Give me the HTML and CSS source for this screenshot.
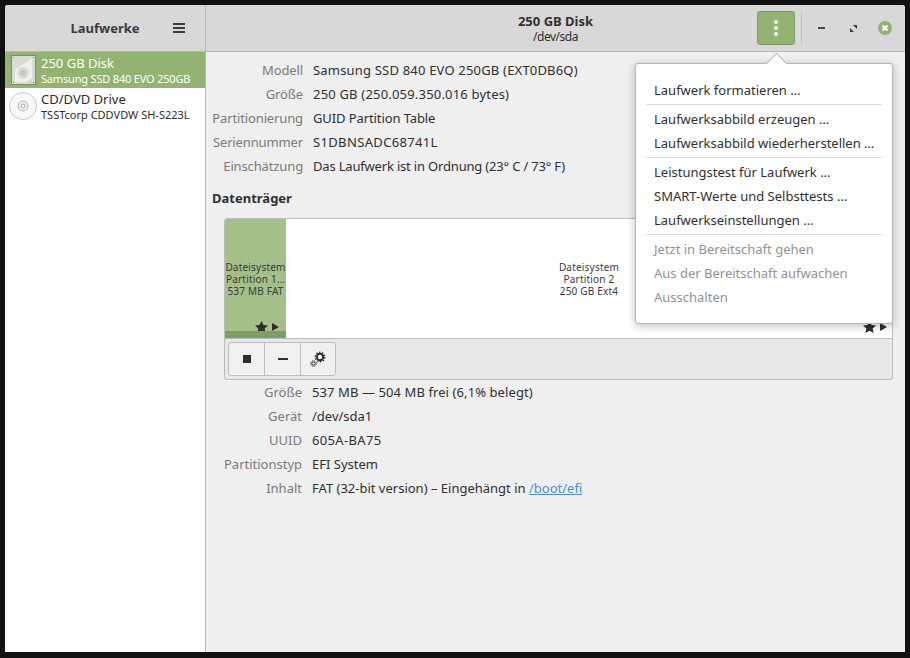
FILE: index.html
```html
<!DOCTYPE html>
<html lang="de">
<head>
<meta charset="utf-8">
<title>Laufwerke</title>
<link rel="stylesheet" href="styles.css">
</head>
<body>
<div class="window">
  <header class="titlebar">
    <div class="side-head">
      <span class="app-title">Laufwerke</span>
      <svg class="hamburger" width="12" height="10" viewBox="0 0 12 10"><path d="M0 0h12v2H0zM0 4h12v2H0zM0 8h12v2H0z" fill="#3d3d3d"/></svg>
    </div>
    <div class="main-head">
      <div class="head-title"><strong>250 GB Disk</strong><span>/dev/sda</span></div>
      <div class="head-actions">
        <button class="menu-btn"><svg width="4" height="16" viewBox="0 0 4 16"><circle cx="2" cy="2" r="2" fill="#fff"/><circle cx="2" cy="8" r="2" fill="#fff"/><circle cx="2" cy="14" r="2" fill="#fff"/></svg></button>
        <span class="head-sep"></span>
        <svg class="wm wm-min" width="7" height="2" viewBox="0 0 7 2"><rect width="7" height="2" fill="#4a4a4a"/></svg>
        <svg class="wm wm-max" width="7" height="7" viewBox="0 0 7 7"><path d="M3 0h4v4zM0 3l4 4H0z" fill="#3d3d3d"/></svg>
        <svg class="wm wm-close" width="14" height="14" viewBox="0 0 14 14"><circle cx="7" cy="7" r="7" fill="#92b372"/><path d="M4.500 4.500l5 5M9.500 4.500l-5 5" stroke="#fff" stroke-width="2"/></svg>
      </div>
    </div>
  </header>
  <div class="content">
    <aside class="sidebar">
      <div class="drive selected">
        <svg class="drive-icon" width="25" height="30" viewBox="0 0 25 30">
          <rect x=".5" y=".5" width="24" height="29" fill="#d8dcd4" stroke="#7c8a72"/>
          <path d="M21 3v20l-6 4H4V15z" fill="#eef0eb"/>
          <circle cx="12" cy="18" r="6" fill="#d9dcd5"/><circle cx="12" cy="18" r="3" fill="#c2c6bd"/>
          <path d="M2 2h1v1H2zM22 2h1v1h-1zM2 27h1v1H2zM22 27h1v1h-1z" fill="#777"/>
        </svg>
        <div class="drive-text"><span class="drive-name">250 GB Disk</span><span class="drive-model tight">Samsung SSD 840 EVO 250GB</span></div>
      </div>
      <div class="drive">
        <svg class="drive-icon" width="28" height="28" viewBox="0 0 28 28">
          <circle cx="14" cy="14" r="13.500" fill="#f8f8f8" stroke="#c4c8cc"/>
          <circle cx="14" cy="14" r="5" fill="#f0f0f0" stroke="#b5b5b5"/>
          <circle cx="14" cy="14" r="2" fill="#fff" stroke="#aaa"/>
        </svg>
        <div class="drive-text"><span class="drive-name">CD/DVD Drive</span><span class="drive-model">TSSTcorp CDDVDW SH-S223L</span></div>
      </div>
    </aside>
    <main class="main">
      <dl class="props top-props">
        <dt>Modell</dt><dd class="wide">Samsung SSD 840 EVO 250GB (EXT0DB6Q)</dd>
        <dt>Größe</dt><dd class="wide">250 GB (250.059.350.016 bytes)</dd>
        <dt>Partitionierung</dt><dd class="slim">GUID Partition Table</dd>
        <dt>Seriennummer</dt><dd class="wider">S1DBNSADC68741L</dd>
        <dt>Einschätzung</dt><dd class="tight">Das Laufwerk ist in Ordnung (23° C / 73° F)</dd>
      </dl>
      <h2 class="section">Datenträger</h2>
      <section class="volumes">
        <div class="volume-map">
          <div class="part part-one">
            <div class="part-label">Dateisystem<br>Partition 1…<br>537 MB FAT</div>
            <div class="part-flags"><svg width="13" height="12" viewBox="0 0 13 12"><path d="M6.500 0l2 4 4.500.6-3.300 3 .9 4.400-4.100-2.200L2.400 12l.9-4.400L0 4.600 4.500 4z" fill="#2e2e2e"/></svg><svg width="7" height="8" viewBox="0 0 7 8"><path d="M0 0l7 4-7 4z" fill="#2e2e2e"/></svg></div>
            <div class="part-usage"></div>
          </div>
          <div class="part part-two">
            <div class="part-label">Dateisystem<br>Partition 2<br>250 GB Ext4</div>
            <div class="part-flags"><svg width="13" height="12" viewBox="0 0 13 12"><path d="M6.500 0l2 4 4.500.6-3.300 3 .9 4.400-4.100-2.200L2.400 12l.9-4.400L0 4.600 4.500 4z" fill="#2e2e2e"/></svg><svg width="7" height="8" viewBox="0 0 7 8"><path d="M0 0l7 4-7 4z" fill="#2e2e2e"/></svg></div>
          </div>
        </div>
        <div class="vol-toolbar">
          <div class="btn-group">
            <button class="tool"><svg width="8" height="8" viewBox="0 0 8 8"><rect width="8" height="8" fill="#2e2e2e"/></svg></button>
            <button class="tool"><svg width="10" height="2" viewBox="0 0 10 2"><rect width="10" height="2" fill="#2e2e2e"/></svg></button>
            <button class="tool"><svg width="16" height="16" viewBox="0 0 16 16"><g fill="none" stroke="#2e2e2e"><circle cx="10" cy="6" r="3.200" stroke-width="2"/><circle cx="10" cy="6" r="4.800" stroke-width="1.300" stroke-dasharray="1.500 1.500"/><circle cx="3.500" cy="12.500" r="1.700" stroke-width="1"/><circle cx="3.500" cy="12.500" r="2.800" stroke-width="1" stroke-dasharray="1.200 1"/></g></svg></button>
          </div>
        </div>
      </section>
      <dl class="props vol-props">
        <dt>Größe</dt><dd class="slim-wide">537 MB — 504 MB frei (6,1% belegt)</dd>
        <dt>Gerät</dt><dd>/dev/sda1</dd>
        <dt>UUID</dt><dd class="wider">605A-BA75</dd>
        <dt>Partitionstyp</dt><dd>EFI System</dd>
        <dt>Inhalt</dt><dd>FAT (32-bit version) – Eingehängt in <a href="#">/boot/efi</a></dd>
      </dl>
    </main>
  </div>
  <nav class="popover">
    <span class="pop-arrow"></span>
    <div class="pop-group"><div class="pop-item">Laufwerk formatieren …</div></div>
    <div class="pop-group"><div class="pop-item">Laufwerksabbild erzeugen …</div><div class="pop-item">Laufwerksabbild wiederherstellen …</div></div>
    <div class="pop-group"><div class="pop-item">Leistungstest für Laufwerk …</div><div class="pop-item">SMART-Werte und Selbsttests …</div><div class="pop-item">Laufwerkseinstellungen …</div></div>
    <div class="pop-group off"><div class="pop-item">Jetzt in Bereitschaft gehen</div><div class="pop-item">Aus der Bereitschaft aufwachen</div><div class="pop-item">Ausschalten</div></div>
  </nav>
</div>
</body>
</html>
```
FILE: styles.css
```css
* { box-sizing: border-box; }
html, body { height: 100%; }
body {
  margin: 0;
  padding: 5px;
  overflow: hidden;
  background: #111;
  font-family: "Noto Sans", sans-serif;
  font-size: 13px;
  color: #303030;
}
.wide { letter-spacing: .19px; }
.wider { letter-spacing: .35px; }
.slim-wide { letter-spacing: .09px; }
.slim { letter-spacing: -.1px; }
.tight { letter-spacing: -.18px; }
.window {
  position: relative;
  width: 900px;
  height: 647px;
  display: flex;
  flex-direction: column;
  background: #efefef;
  border-radius: 3px 3px 0 0;
  overflow: hidden;
}
.titlebar {
  flex: 0 0 47px;
  display: flex;
  background: #d8d8d8;
  border-bottom: 1px solid #b9b9b9;
}
.side-head {
  flex: 0 0 201px;
  display: flex;
  align-items: center;
  justify-content: center;
  position: relative;
  border-right: 1px solid #bcbcbc;
}
.app-title { font-weight: 700; color: #3d3846; }
.hamburger { position: absolute; left: 168px; top: 18px; }
.main-head {
  flex: 1;
  position: relative;
  display: flex;
  align-items: center;
  justify-content: center;
}
.head-title {
  display: flex;
  flex-direction: column;
  align-items: center;
  line-height: 15px;
  margin-top: 1px;
}
.head-title strong { font-weight: 700; font-size: 13px; }
.head-title span { font-size: 12px; letter-spacing: -.5px; }
.head-actions {
  position: absolute;
  left: 551px;
  top: 6px;
  height: 34px;
  display: flex;
  align-items: center;
}
.menu-btn {
  width: 38px;
  height: 34px;
  padding: 0;
  display: flex;
  align-items: center;
  justify-content: center;
  background: #92b372;
  border: 1px solid #7d9a61;
  border-radius: 3px;
}
.head-sep { width: 1px; height: 34px; margin-left: 6px; background: #c4c4c4; }
.wm-min { margin-left: 16px; }
.wm-max { margin-left: 25px; }
.wm-close { margin-left: 21px; }
.content { flex: 1; display: flex; min-height: 0; }
.sidebar {
  flex: 0 0 201px;
  background: #fff;
  border-right: 1px solid #b9b9b9;
}
.drive {
  height: 36px;
  display: flex;
  align-items: center;
  color: #2c2c2c;
}
.drive.selected { background: #92b372; color: #fff; }
.drive-icon { flex: none; margin-left: 4px; }
.drive.selected .drive-icon { margin-left: 6px; margin-right: 1px; }
.drive-text {
  display: flex;
  flex-direction: column;
  margin-left: 4px;
}
.drive.selected .drive-text { margin-left: 4px; }
.drive-name { font-size: 13px; line-height: 16px; }
.drive-model { font-size: 11px; line-height: 15px; }
.main { flex: 1; min-width: 0; padding: 6px 12px 0 6px; }
.props {
  margin: 0;
  display: grid;
  grid-auto-rows: 24px;
  align-items: center;
  column-gap: 10px;
}
.props dt { text-align: right; color: #7a7a7a; }
.props dd { margin: 0; }
.top-props { grid-template-columns: 91px 1fr; }
.top-props dt { letter-spacing: -.13px; }
.section { margin: 10px 0 0; height: 20px; line-height: 20px; font-size: 13px; font-weight: 700; color: #303030; }
.volumes {
  margin: 10px 0 0 12px;
  height: 162px;
  border: 1px solid #bdbdbd;
  border-radius: 3px;
  background: #e8e8e8;
  overflow: hidden;
}
.volume-map {
  height: 120px;
  display: flex;
  background: #fff;
  border-bottom: 1px solid #bdbdbd;
}
.part { position: relative; display: flex; align-items: center; justify-content: center; }
.part-one { flex: 0 0 61px; background: #a4bf88; }
.part-two { flex: 1; background: #fff; }
.part-label {
  font-size: 10px;
  line-height: 12px;
  letter-spacing: .2px;
  text-align: center;
  white-space: nowrap;
  color: #3a3a3a;
}
.part-flags {
  position: absolute;
  right: 5px;
  bottom: 5px;
  display: flex;
  align-items: center;
  gap: 4px;
}
.part-one .part-flags { right: 7px; }
.part-usage { position: absolute; left: 0; right: 0; bottom: 0; height: 7px; background: #7f9f62; }
.vol-toolbar { padding: 3px; }
.btn-group {
  display: inline-flex;
  height: 34px;
  border: 1px solid #bdbdbd;
  border-radius: 3px;
  background: #f0f0f0;
  overflow: hidden;
}
.tool {
  width: 36px;
  padding: 0;
  display: flex;
  align-items: center;
  justify-content: center;
  background: transparent;
  border: 0;
  border-left: 1px solid #bdbdbd;
}
.tool:first-child { border-left: 0; width: 35px; }
.tool:last-child { width: 35px; }
.vol-props { margin: 0 0 0 12px; grid-template-columns: 78px 1fr; }
.vol-props a { color: #4a90d9; text-decoration: underline; }
.popover {
  position: absolute;
  left: 630px;
  top: 58px;
  width: 258px;
  height: 261px;
  padding: 14px 10px 0;
  background: #fff;
  border: 1px solid #b5b5b5;
  border-radius: 3px;
  box-shadow: 0 2px 8px rgba(0,0,0,.25);
}
.pop-arrow {
  position: absolute;
  left: 133px;
  top: -8px;
  width: 15px;
  height: 15px;
  background: #fff;
  border-left: 1px solid #b5b5b5;
  border-top: 1px solid #b5b5b5;
  transform: rotate(45deg);
}
.pop-group { position: relative; border-bottom: 1px solid #dcdcdc; padding-bottom: 2px; margin-bottom: 2px; }
.pop-group:last-child { border-bottom: 0; }
.pop-item { height: 24px; line-height: 24px; padding-left: 8px; color: #303030; white-space: nowrap; }
.off .pop-item { color: #929292; }
```
